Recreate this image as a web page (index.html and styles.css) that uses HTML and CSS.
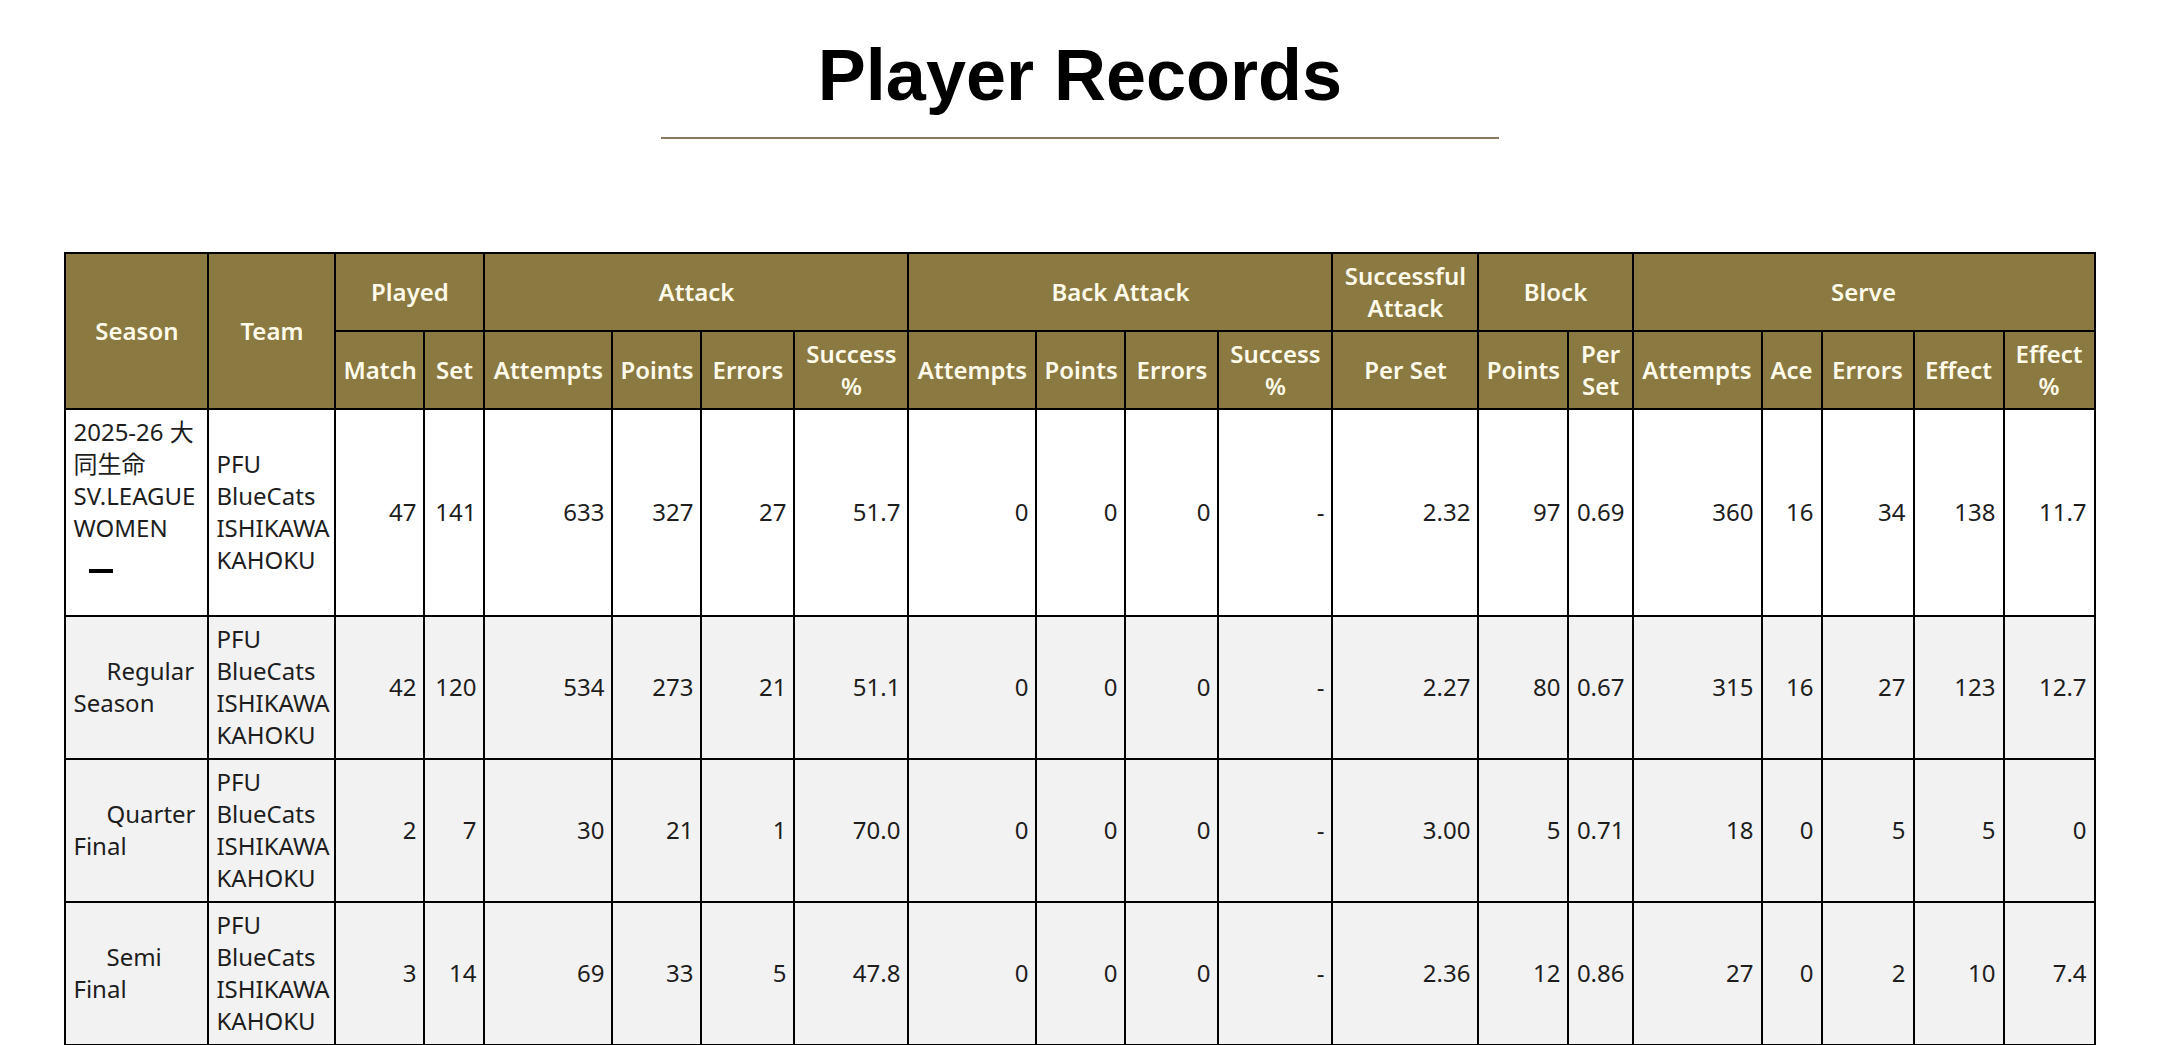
FILE: index.html
```html
<!DOCTYPE html>
<html lang="en">
<head>
<meta charset="utf-8">
<title>Player Records</title>
<link rel="stylesheet" href="styles.css">
</head>
<body>
<header class="page-head">
  <h1 class="title">Player Records</h1>
  <div class="title-rule"></div>
</header>
<div class="table-wrap">
<table class="records">
  <colgroup>
    <col style="width:143px"><col style="width:127px">
    <col style="width:89px"><col style="width:60px">
    <col style="width:128px"><col style="width:89px"><col style="width:93px"><col style="width:114px">
    <col style="width:128px"><col style="width:89px"><col style="width:93px"><col style="width:114px">
    <col style="width:146px">
    <col style="width:90px"><col style="width:64px">
    <col style="width:129px"><col style="width:60px"><col style="width:92px"><col style="width:90px"><col style="width:91px">
  </colgroup>
  <thead>
    <tr>
      <th rowspan="2">Season</th>
      <th rowspan="2">Team</th>
      <th colspan="2">Played</th>
      <th colspan="4">Attack</th>
      <th colspan="4">Back Attack</th>
      <th>Successful<br>Attack</th>
      <th colspan="2">Block</th>
      <th colspan="5">Serve</th>
    </tr>
    <tr>
      <th>Match</th><th>Set</th>
      <th>Attempts</th><th>Points</th><th>Errors</th><th>Success<br>%</th>
      <th>Attempts</th><th>Points</th><th>Errors</th><th>Success<br>%</th>
      <th>Per Set</th>
      <th>Points</th><th>Per<br>Set</th>
      <th>Attempts</th><th>Ace</th><th>Errors</th><th>Effect</th><th>Effect<br>%</th>
    </tr>
  </thead>
  <tbody>
    <tr>
      <td class="txt season-main">2025-26 大<br>同生命<br>SV.LEAGUE<br>WOMEN<br><span class="dash"></span><br>&nbsp;</td>
      <td class="txt">PFU<br>BlueCats<br>ISHIKAWA<br>KAHOKU</td>
      <td>47</td><td>141</td>
      <td>633</td><td>327</td><td>27</td><td>51.7</td>
      <td>0</td><td>0</td><td>0</td><td>-</td>
      <td>2.32</td>
      <td>97</td><td>0.69</td>
      <td>360</td><td>16</td><td>34</td><td>138</td><td>11.7</td>
    </tr>
    <tr class="sub">
      <td class="txt"><span class="indent">Regular</span><br>Season</td>
      <td class="txt">PFU<br>BlueCats<br>ISHIKAWA<br>KAHOKU</td>
      <td>42</td><td>120</td>
      <td>534</td><td>273</td><td>21</td><td>51.1</td>
      <td>0</td><td>0</td><td>0</td><td>-</td>
      <td>2.27</td>
      <td>80</td><td>0.67</td>
      <td>315</td><td>16</td><td>27</td><td>123</td><td>12.7</td>
    </tr>
    <tr class="sub">
      <td class="txt"><span class="indent">Quarter</span><br>Final</td>
      <td class="txt">PFU<br>BlueCats<br>ISHIKAWA<br>KAHOKU</td>
      <td>2</td><td>7</td>
      <td>30</td><td>21</td><td>1</td><td>70.0</td>
      <td>0</td><td>0</td><td>0</td><td>-</td>
      <td>3.00</td>
      <td>5</td><td>0.71</td>
      <td>18</td><td>0</td><td>5</td><td>5</td><td>0</td>
    </tr>
    <tr class="sub">
      <td class="txt"><span class="indent">Semi</span><br>Final</td>
      <td class="txt">PFU<br>BlueCats<br>ISHIKAWA<br>KAHOKU</td>
      <td>3</td><td>14</td>
      <td>69</td><td>33</td><td>5</td><td>47.8</td>
      <td>0</td><td>0</td><td>0</td><td>-</td>
      <td>2.36</td>
      <td>12</td><td>0.86</td>
      <td>27</td><td>0</td><td>2</td><td>10</td><td>7.4</td>
    </tr>
  </tbody>
</table>
</div>
</body>
</html>
```
FILE: styles.css
```css
html, body {
  margin: 0;
  padding: 0;
  background: #ffffff;
}

body {
  font-family: "Noto Sans", "Noto Sans CJK JP", sans-serif;
  color: #1e1e1e;
}

.page-head {
  display: flex;
  flex-direction: column;
  align-items: center;
  padding-top: 39px;
}

.title {
  margin: 0;
  font-family: "Liberation Sans", Arial, sans-serif;
  font-weight: 700;
  font-size: 72px;
  line-height: 72px;
  color: #000;
}

.title-rule {
  width: 838px;
  height: 2px;
  margin-top: 26px;
  background: #857a5c;
}

.table-wrap {
  display: flex;
  justify-content: center;
  padding-top: 113px;
}

.records {
  width: 2029px;
  table-layout: fixed;
  border-collapse: collapse;
  font-size: 24px;
  line-height: 32px;
}

.records th,
.records td {
  border: 2px solid #000;
  padding: 6px 7px;
}

.records th {
  background: #8a7940;
  color: #fffbeb;
  font-weight: 600;
  text-align: center;
  vertical-align: middle;
  white-space: nowrap;
}

.records td {
  padding: 6px 7px 7px;
  text-align: right;
  vertical-align: middle;
  white-space: nowrap;
  background: #ffffff;
  color: #1e1e1e;
}

.records tr.sub td {
  background: #f2f2f2;
}

.records td.txt {
  text-align: left;
}

.records td.season-main {
  vertical-align: top;
}

.indent {
  padding-left: 33px;
}

.dash {
  display: inline-block;
  width: 24px;
  height: 4px;
  margin-left: 16px;
  background: #000;
  vertical-align: -4px;
}
```
